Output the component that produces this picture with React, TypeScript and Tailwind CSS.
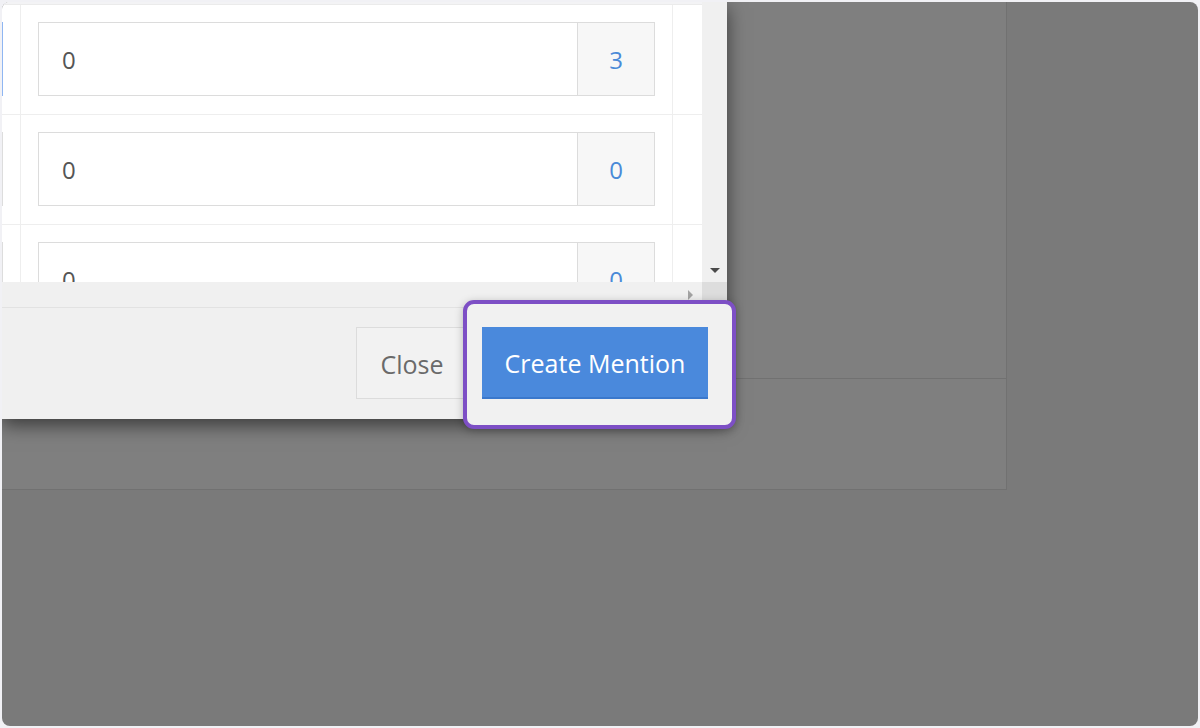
import React from 'react';

const rows = [
  { value: '0', count: '3', focused: true },
  { value: '0', count: '0', focused: false },
  { value: '0', count: '0', focused: false },
];

const MentionRow: React.FC<{ value: string; count: string; focused: boolean }> = ({ value, count, focused }) => (
  <div className="flex shrink-0 h-[110px] border-b border-[#eeeeee]">
    {/* cut-off first column, only the right edge of its input shows */}
    <div className="w-[19px] shrink-0 border-r border-[#eeeeee] pt-[17px]">
      <div className={`w-[1px] h-[74px] ${focused ? 'bg-[#8fb6f2]' : 'bg-[#dddddd]'}`} />
    </div>
    <div className="w-[652px] shrink-0 border-r border-[#eeeeee] pl-[17px] pr-[17px] pt-[17px]">
      <div className="flex h-[74px] border border-[#dcdcdc] bg-white">
        <div className="flex-1 flex items-center pl-[23px] pt-[2px] text-[24px] text-[#555555]">{value}</div>
        <div className="w-[77px] flex items-center justify-center pt-[2px] border-l border-[#dcdcdc] bg-[#f7f7f7] text-[24px] text-[#4a8ad8]">
          {count}
        </div>
      </div>
    </div>
    <div className="flex-1" />
  </div>
);

const App: React.FC = () => {
  return (
    <div
      className="w-[1200px] h-[728px] bg-[#f1f1f5] p-[2px]"
      style={{ fontFamily: '"Open Sans", "Noto Sans", sans-serif' }}
    >
      <div className="relative h-full w-full overflow-hidden rounded-[8px] bg-[#7a7a7a]">
        {/* dimmed page behind the modal */}
        <div className="w-[1005px] h-[488px] bg-[#7f7f7f] border-r border-b border-[#717171]">
          <div className="ml-[725px] h-[377px] border-b border-[#717171]" />
        </div>

        {/* modal */}
        <div className="absolute left-0 top-0 w-[725px] h-[417px] flex flex-col bg-[#f0f0f0] shadow-[0_6px_18px_rgba(0,0,0,0.55)]">
          <div className="flex h-[280px]">
            <div className="w-[700px] flex flex-col overflow-hidden bg-white border-t-2 border-[#f3f3f5]">
              <div className="h-[1px] shrink-0 bg-[#ebebeb]" />
              {rows.map((r, i) => (
                <MentionRow key={i} value={r.value} count={r.count} focused={r.focused} />
              ))}
            </div>
            <div className="flex-1 flex flex-col justify-end items-center bg-[#f0f0f0] pb-[9px]">
              <div className="w-0 h-0 border-l-[5px] border-r-[5px] border-t-[5px] border-l-transparent border-r-transparent border-t-[#4a4a4a]" />
            </div>
          </div>
          <div className="flex h-[25px]">
            <div className="w-[700px] flex items-center justify-end pr-[9px] bg-[#f0f0f0]">
              <div className="w-0 h-0 border-t-[5px] border-b-[5px] border-l-[5px] border-t-transparent border-b-transparent border-l-[#a3a3a3]" />
            </div>
            <div className="flex-1 bg-[#dddddd]" />
          </div>
          <div className="flex-1 flex justify-end items-start gap-[14px] border-t border-[#e2e2e2] pt-[19px] pr-[19px]">
            <button className="w-[112px] h-[72px] pt-[3px] border border-[#dcdcdc] bg-[#f2f2f2] text-[25px] text-[#6a6a6a]">
              Close
            </button>
            <button className="relative z-20 w-[226px] h-[72px] pt-[3px] bg-[#4a89dc] border-b-2 border-[#3a78cc] text-[25px] text-white">
              Create Mention
            </button>
          </div>
        </div>

        {/* highlight around the primary action */}
        <div className="absolute left-[461px] top-[298px] z-10 w-[273px] h-[129px] rounded-[11px] border-4 border-[#7d4fc5] bg-[#f1f1f1] shadow-[0_2px_8px_rgba(0,0,0,0.25)]" />
      </div>
    </div>
  );
};

export default App;
